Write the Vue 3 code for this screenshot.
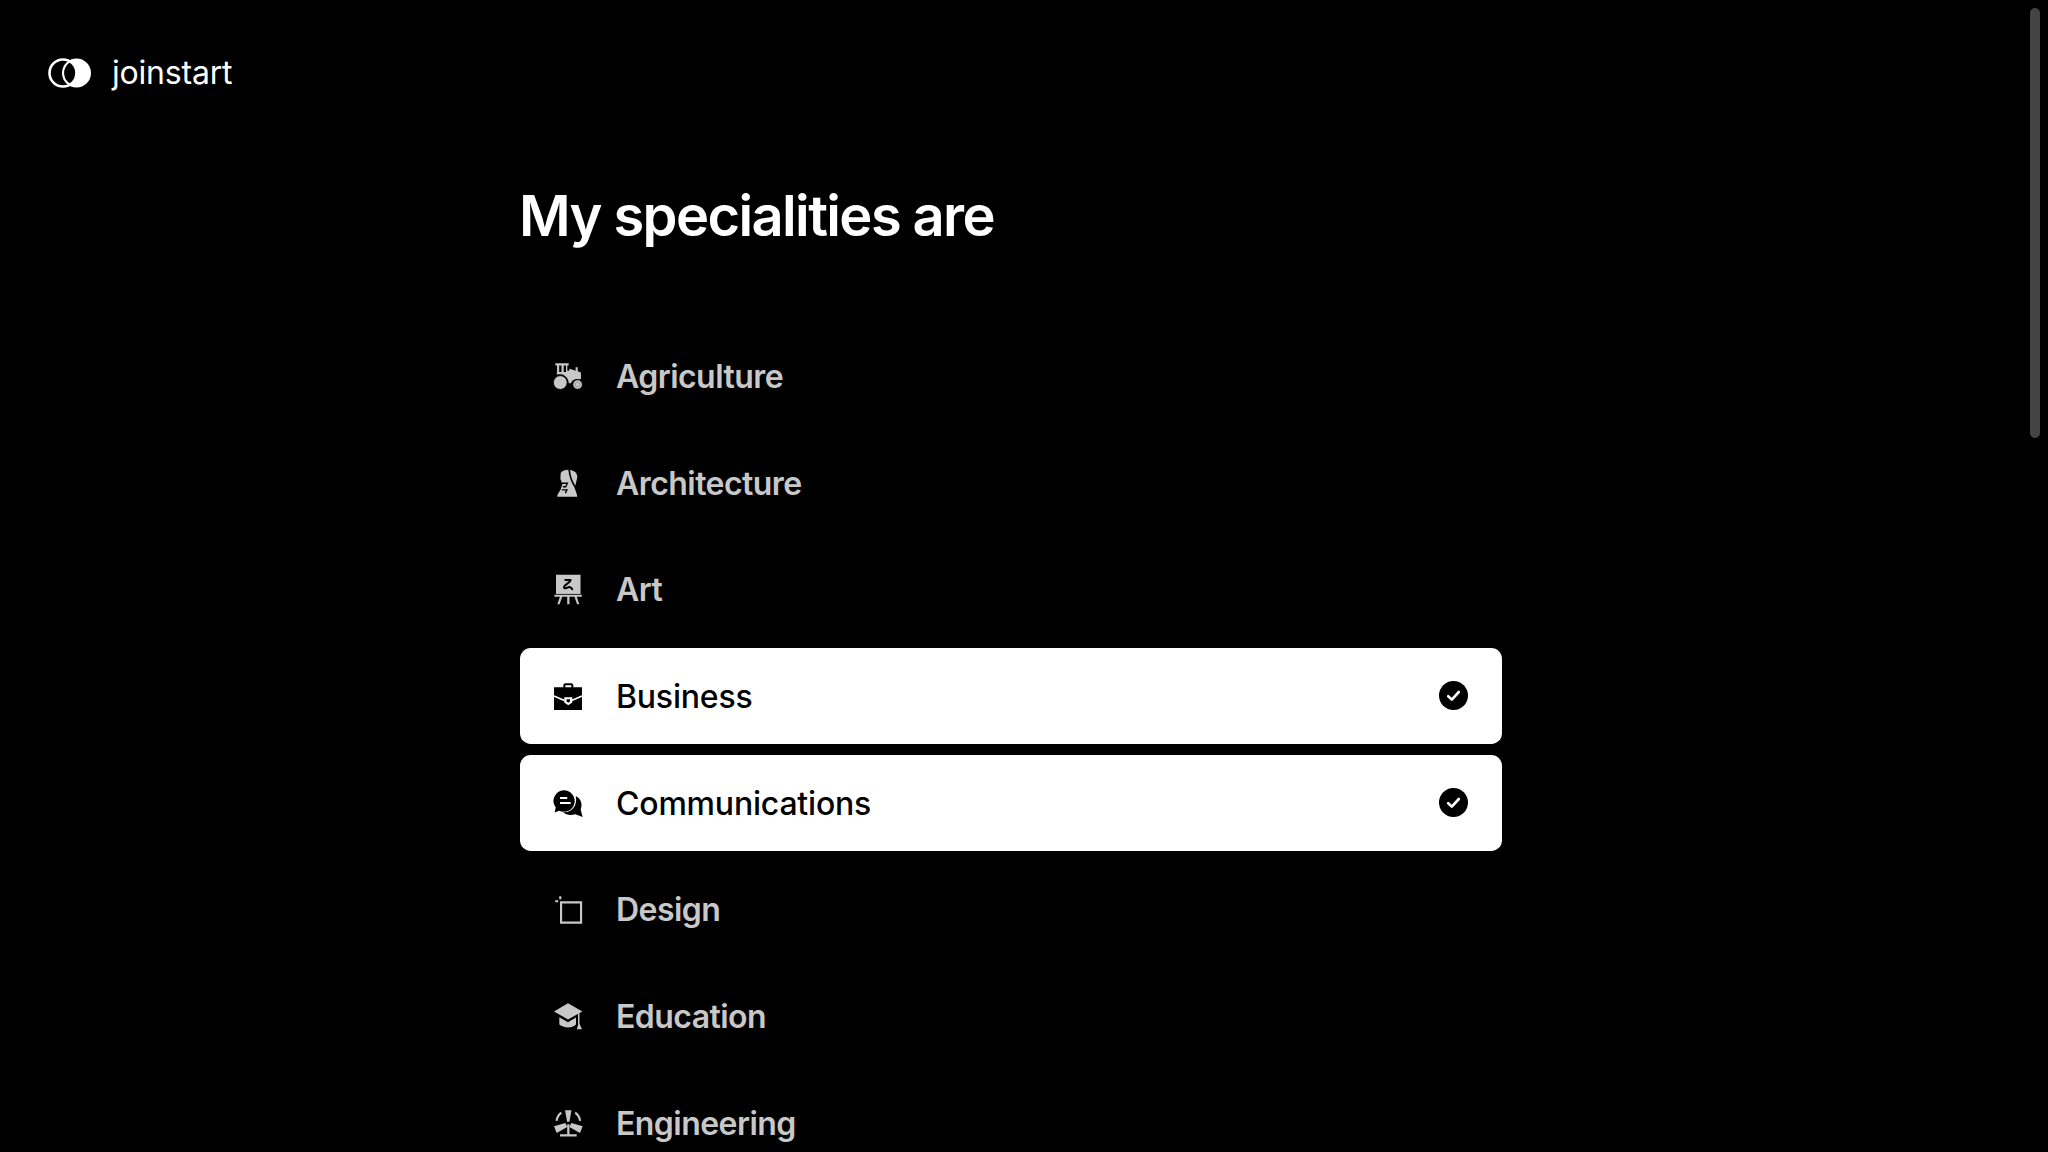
<template>
  <div class="page">
    <header class="brand">
      <svg class="brand-mark" viewBox="0 0 44 30" aria-hidden="true">
        <defs>
          <clipPath id="lens"><circle cx="15" cy="15" r="13.5" /></clipPath>
        </defs>
        <circle cx="28.5" cy="15" r="14.5" fill="#fff" />
        <circle cx="28.5" cy="15" r="12.4" fill="#000" clip-path="url(#lens)" />
        <circle cx="15" cy="15" r="13.5" fill="none" stroke="#fff" stroke-width="2.6" />
        <path d="M25 3.2A14 14 0 0 1 25 26.8 A13.5 13.5 0 0 0 25 3.2Z" fill="#fff" />
      </svg>
      <span class="brand-name">joinstart</span>
    </header>

    <main class="content">
      <h1 class="title">My specialities are</h1>
      <ul class="list">
        <li v-for="item in items" :key="item.name" class="row" :class="{ selected: item.selected }">
          <svg class="row-icon" viewBox="0 0 24 24" aria-hidden="true" v-html="item.icon"></svg>
          <span class="row-label">{{ item.name }}</span>
          <svg v-if="item.selected" class="row-check" viewBox="0 0 29 29" aria-hidden="true">
            <circle cx="14.5" cy="14.5" r="14.5" fill="#000" />
            <path d="M9.2 15.2l3.6 3.4 7-7.6" fill="none" stroke="#fff" stroke-width="2.6" stroke-linecap="round" stroke-linejoin="round" />
          </svg>
        </li>
      </ul>
    </main>

    <div class="scroll-thumb"></div>
  </div>
</template>

<script setup>
const tractor = `
  <path fill="currentColor" d="M2.5 2.5h10v1.6h-1V8h1.2l.6-1.4 4.4 1.4V5.5h1.6v3l2.4.8V14l-1 .6a5 5 0 0 0-6.6 2.9h-1.5a7 7 0 0 0-9-6.6V9H3.8V4.1H2.5zM5.4 4.1V9h1.7V4.1zM8.8 4.1V9h1.7V4.1z" fill-rule="evenodd"/>
  <circle cx="6.2" cy="16.9" r="5.2" fill="currentColor" stroke="#000" stroke-width=".7"/>
  <circle cx="19.2" cy="18.4" r="3.6" fill="currentColor" stroke="#000" stroke-width=".7"/>
  <circle cx="19.2" cy="18.4" r="1.8" fill="none" stroke="#000" stroke-opacity=".35" stroke-width=".5"/>`

const architecture = `
  <path fill="currentColor" d="M6.5 4.5C7.5 2.8 10 2 12.2 2c.4 4.5 2.2 9.5 4.5 13l2.1 6v1.3H4V21l2.4-4 1.4-4-1.5-4z"/>
  <path fill="currentColor" d="M13.6 2.2C17 2.8 19 4.5 19 7.5L17.5 14c-2.1-3.5-3.7-7.5-3.9-11.8z"/>
  <path fill="none" stroke="#000" stroke-width="1" d="M6.5 12.2h5l-1.2 2.6H8.2M7.4 17.2h3.8l-1.2 2.4"/>`

const art = `
  <path fill="currentColor" d="M3 1.3h18.4v14.4H3z"/>
  <path fill="currentColor" d="M1.8 16.4h20.6v1.5H1.8zM6 17.6h1.7l-2 5.9H4zM11.4 17.6h1.7v5.9h-1.7zM16.8 17.6h1.7l2 5.9h-1.7z"/>
  <path fill="none" stroke="#000" stroke-width="1.5" stroke-linecap="round" stroke-linejoin="round" d="M10 5.2h4c0 2-4.5 3-5 5.4-.2 1.2 1.6 1 2.6.4 1-.6 2.6-.8 3.6 1.2"/>`

const business = `
  <path fill="currentColor" fill-rule="evenodd" d="M8.5 5.5V4a1.5 1.5 0 0 1 1.5-1.5h4.5A1.5 1.5 0 0 1 16 4v1.5h6.5v17h-21v-17zM10 5.5h4.5V4H10z"/>
  <path fill="none" stroke="#fff" stroke-width="1.3" d="M1.5 12l7.8 3.4M22.5 12l-7.8 3.4"/>
  <path fill="#fff" d="M9.2 13h6v3.8l-3 2.2-3-2.2z"/>
  <path fill="#000" d="M10.9 14.4h2.6v1.7l-1.3 1-1.3-1z"/>`

const communications = `
  <path fill="currentColor" d="M8.8 2.4a8.1 8.1 0 1 1-3.4 15.4L2 19.2l.8-3.8A8.1 8.1 0 0 1 8.8 2.4z"/>
  <path fill="none" stroke="#fff" stroke-width="1.5" d="M6 8.2h5.4M6 12h8"/>
  <path fill="currentColor" d="M17.8 6.8C22 9 23 13 21.5 17l1.5 5.5-5.5-2C14 21.7 10.5 21 8 18.8c5.5 1.2 11.5-3.8 9.8-12z"/>`

const design = `
  <path fill="none" stroke="currentColor" stroke-width="1.6" d="M6.8 7h15v15.2h-15zM6.2 2.4v2.2M2.4 6.2h2.2"/>`

const education = `
  <path fill="currentColor" d="M12 2.5L1.5 8.6 12 14.6l10.8-6z"/>
  <path fill="currentColor" d="M5.5 13l6.5 3.6L18 13.2v5.2c-1.4 1.4-3.6 2.2-6 2.2s-5-.9-6.5-2.2z"/>
  <path fill="currentColor" d="M19.5 10h1.1v8h-1.1zM18.6 22l1.5-5.4 2.4 5.4z"/>`

const engineering = `
  <path fill="currentColor" d="M9.8 2.5h4.8l-1.5 8.6h-1.8z"/>
  <path fill="currentColor" d="M1.5 14.5l2 5 8-4.5-1.5-3zM23 14.5l-2 5-8-4.5 1.5-3z"/>
  <path fill="currentColor" d="M11.4 13h1.7v7.6h-1.7zM6 20.5h12.5v1.7H6z"/>
  <path fill="none" stroke="currentColor" stroke-width="1.6" d="M7 4.2a9.6 9.6 0 0 0-3.6 6.2M17.4 4.2a9.6 9.6 0 0 1 3.7 6.2"/>`

const items = [
  { name: 'Agriculture', icon: tractor },
  { name: 'Architecture', icon: architecture },
  { name: 'Art', icon: art },
  { name: 'Business', icon: business, selected: true },
  { name: 'Communications', icon: communications, selected: true },
  { name: 'Design', icon: design },
  { name: 'Education', icon: education },
  { name: 'Engineering', icon: engineering }
]
</script>

<style scoped>
.page {
  position: relative;
  height: 1152px;
  overflow: hidden;
  background: #000;
  color: #fff;
  font-family: Inter, "Liberation Sans", sans-serif;
}

.brand {
  display: flex;
  align-items: center;
  gap: 20px;
  padding: 57px 0 0 48px;
}

.brand-mark {
  width: 44px;
  height: 30px;
}

.brand-name {
  font-size: 32px;
  line-height: 32px;
  font-weight: 400;
  letter-spacing: -0.2px;
}

.content {
  width: 983px;
  margin-left: 519px;
}

.title {
  margin: 91px 0 0;
  font-size: 56px;
  line-height: 72px;
  font-weight: 600;
  letter-spacing: -1.6px;
}

.list {
  list-style: none;
  margin: 76px 0 0 1px;
  padding: 0;
  display: flex;
  flex-direction: column;
  gap: 10.67px;
}

.row {
  display: flex;
  align-items: center;
  gap: 32px;
  height: 96px;
  flex-shrink: 0;
  padding: 0 34px 0 32px;
  border-radius: 10.67px;
  color: #c8c8c8;
}

.row.selected {
  background: #fff;
  color: #000;
}

.row-icon {
  width: 32px;
  height: 32px;
  flex-shrink: 0;
}

.row-label {
  flex: 1;
  padding-top: 1px;
  font-size: 32px;
  font-weight: 600;
  letter-spacing: -0.55px;
}

.row.selected .row-label {
  font-weight: 500;
  letter-spacing: -0.2px;
}

.row-check {
  width: 29px;
  height: 29px;
}

.scroll-thumb {
  position: absolute;
  top: 8px;
  right: 8px;
  width: 10px;
  height: 430px;
  border-radius: 5px;
  background: #444;
}
</style>

<style>
body {
  background: #000;
}
</style>
